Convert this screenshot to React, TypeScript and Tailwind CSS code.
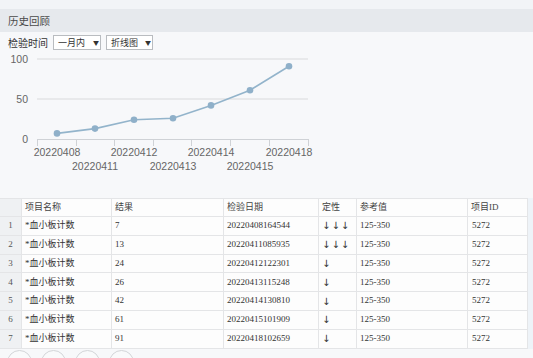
import React from "react";

const rows = [
  { n: 1, v: "7", d: "20220408164544", q: "↓↓↓" },
  { n: 2, v: "13", d: "20220411085935", q: "↓↓↓" },
  { n: 3, v: "24", d: "20220412122301", q: "↓" },
  { n: 4, v: "26", d: "20220413115248", q: "↓" },
  { n: 5, v: "42", d: "20220414130810", q: "↓" },
  { n: 6, v: "61", d: "20220415101909", q: "↓" },
  { n: 7, v: "91", d: "20220418102659", q: "↓" },
];

const pts = [
  { x: 57, v: 7, l: "20220408", r: 0 },
  { x: 95, v: 13, l: "20220411", r: 1 },
  { x: 134, v: 24, l: "20220412", r: 0 },
  { x: 173, v: 26, l: "20220413", r: 1 },
  { x: 211, v: 42, l: "20220414", r: 0 },
  { x: 250, v: 61, l: "20220415", r: 1 },
  { x: 289, v: 91, l: "20220418", r: 0 },
];

const ticks = [37, 76, 114, 153, 191, 230, 269, 308];

function Chart() {
  const y = (v: number) => 89 - v * 0.8;
  return (
    <svg width="533" height="148" className="block shrink-0">
      <line x1="37" x2="308" y1="9" y2="9" stroke="#d9dadc" strokeWidth="1" />
      <line x1="37" x2="308" y1="49" y2="49" stroke="#d9dadc" strokeWidth="1" />
      <line x1="37" x2="308" y1="89.5" y2="89.5" stroke="#cfd2d6" strokeWidth="1" />
      {ticks.map((t) => (
        <line key={t} x1={t + 0.5} x2={t + 0.5} y1="89" y2="96" stroke="#cfd2d6" strokeWidth="1" />
      ))}
      <g fill="#666" fontSize="10.5" fontFamily="'Liberation Sans', Arial, sans-serif">
        <text x="28" y="12.5" textAnchor="end">100</text>
        <text x="28" y="52.5" textAnchor="end">50</text>
        <text x="28" y="92.5" textAnchor="end">0</text>
        {pts.map((p) => (
          <text key={p.l} x={p.x} y={p.r ? 120 : 105.5} textAnchor="middle">
            {p.l}
          </text>
        ))}
      </g>
      <polyline
        points={pts.map((p) => `${p.x},${y(p.v)}`).join(" ")}
        fill="none"
        stroke="#93b4cb"
        strokeWidth="1.6"
      />
      {pts.map((p) => (
        <circle key={p.x} cx={p.x} cy={y(p.v)} r="3.3" fill="#8fb0c9" />
      ))}
    </svg>
  );
}

const cell = "border-r border-b border-[#e4e5e7] pl-[3px] flex items-center overflow-hidden whitespace-nowrap";

export default function App() {
  return (
    <div
      className="w-[533px] h-[358px] overflow-hidden bg-[#f7f8fa] text-[#333] flex flex-col"
      style={{ fontFamily: "'Liberation Serif', 'Noto Sans CJK SC', serif" }}
    >
      <div className="h-[9px] shrink-0 bg-[#f2f4f7]" />
      <div
        className="h-[23px] shrink-0 bg-[#e6e9ed] flex items-center pl-[8px] text-[10.5px] text-[#4a4a4a]"
        style={{ fontFamily: "'Noto Sans CJK SC', sans-serif" }}
      >
        历史回顾
      </div>
      <div
        className="h-[18px] shrink-0 pt-[3px] flex items-center text-[10px] text-[#333] whitespace-nowrap"
        style={{ fontFamily: "'Noto Sans CJK SC', sans-serif" }}
      >
        <span className="pl-[8px] w-[53px]">检验时间</span>
        <div className="w-[48px] h-[15px] border border-[#b9bcc0] bg-white flex items-center pl-[4px] text-[9px]">
          <span>一月内</span>
          <span className="text-[6px] ml-[8px]">▼</span>
        </div>
        <div className="ml-[5px] w-[47px] h-[15px] border border-[#b9bcc0] bg-white flex items-center pl-[4px] text-[9px]">
          <span>折线图</span>
          <span className="text-[6px] ml-[7px]">▼</span>
        </div>
      </div>
      <Chart />
      <div className="flex shrink-0">
        <div className="grid grid-cols-[22px_90px_112px_95px_38px_111px_60px] bg-[#fdfdfd] border-t border-[#e4e5e7] text-[9px]">
          <div className="h-[18px] bg-[#eff1f3] border-r border-b border-[#e4e5e7]" />
          {["项目名称", "结果", "检验日期", "定性", "参考值", "项目ID"].map((h) => (
            <div key={h} className={`${cell} h-[18px] text-[#444]`}>
              {h}
            </div>
          ))}
          {rows.map((r) => (
            <React.Fragment key={r.n}>
              <div className="h-[18.8px] bg-[#eff1f3] border-r border-b border-[#e4e5e7] flex items-center justify-center text-[#555]">
                {r.n}
              </div>
              <div className={`${cell} h-[18.8px]`}>*血小板计数</div>
              <div className={`${cell} h-[18.8px]`}>{r.v}</div>
              <div className={`${cell} h-[18.8px]`}>{r.d}</div>
              <div
                className={`${cell} h-[18.8px] text-[10px] tracking-[1px]`}
                style={{ fontFamily: "'DejaVu Sans', sans-serif" }}
              >
                {r.q}
              </div>
              <div className={`${cell} h-[18.8px]`}>125-350</div>
              <div className={`${cell} h-[18.8px] pl-[4px]`}>5272</div>
            </React.Fragment>
          ))}
        </div>
        <div className="flex-1 bg-[#eef3f8]" />
      </div>
      <div className="flex shrink-0 gap-[9px] pl-[7px] pt-[1px]">
        {[0, 1, 2, 3].map((i) => (
          <div key={i} className="w-[25px] h-[25px] rounded-full border border-[#d3d5d8] bg-[#f9fafb] shrink-0" />
        ))}
      </div>
    </div>
  );
}
